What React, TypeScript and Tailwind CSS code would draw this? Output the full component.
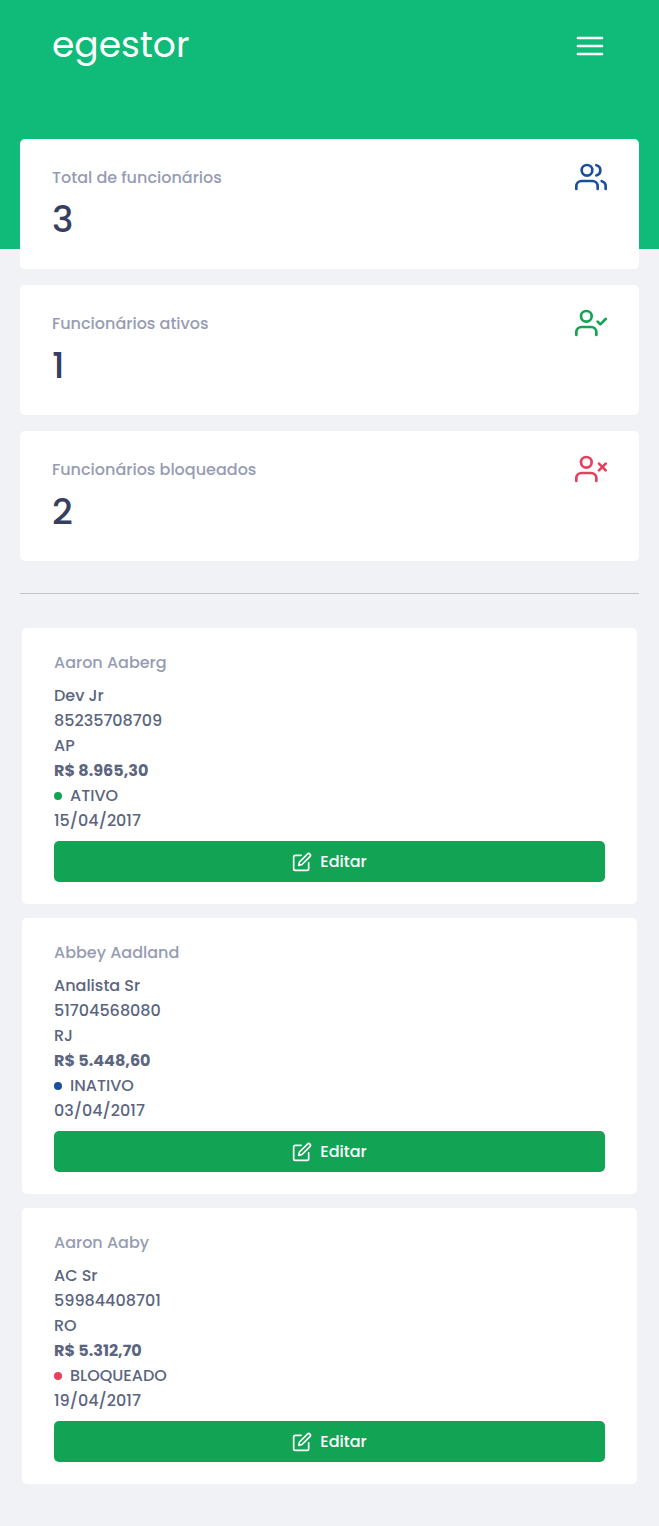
import type { ReactNode } from "react";
import { FiEdit, FiMenu, FiUserCheck, FiUsers, FiUserX } from "react-icons/fi";

type Employee = {
  name: string;
  role: string;
  cpf: string;
  uf: string;
  salary: string;
  status: string;
  dot: string;
  date: string;
};

const employees: Employee[] = [
  { name: "Aaron Aaberg", role: "Dev Jr", cpf: "85235708709", uf: "AP", salary: "R$ 8.965,30", status: "ATIVO", dot: "bg-[#12a454]", date: "15/04/2017" },
  { name: "Abbey Aadland", role: "Analista Sr", cpf: "51704568080", uf: "RJ", salary: "R$ 5.448,60", status: "INATIVO", dot: "bg-[#1a4f9c]", date: "03/04/2017" },
  { name: "Aaron Aaby", role: "AC Sr", cpf: "59984408701", uf: "RO", salary: "R$ 5.312,70", status: "BLOQUEADO", dot: "bg-[#e83f5b]", date: "19/04/2017" },
];

function StatCard({ label, value, icon }: { label: string; value: number; icon: ReactNode }) {
  return (
    <div className="h-[130px] rounded-[5px] bg-white px-8 pt-[22px]">
      <header className="flex h-8 items-center justify-between">
        <p className="pt-0.5 text-[#969cb3]">{label}</p>
        {icon}
      </header>
      <strong className="block text-4xl leading-[54px] font-medium text-[#363f5f]">{value}</strong>
    </div>
  );
}

function EmployeeCard({ employee }: { employee: Employee }) {
  return (
    <article className="flex h-[276px] flex-col rounded-[5px] bg-white px-8 pt-[22px] leading-[25px] text-[#5c6580]">
      <h2 className="mb-2 text-[#969cb3]">{employee.name}</h2>
      <p>{employee.role}</p>
      <p>{employee.cpf}</p>
      <p>{employee.uf}</p>
      <p className="font-bold">{employee.salary}</p>
      <p className="flex items-center gap-2">
        <span className={`size-2 rounded-full ${employee.dot}`} />
        {employee.status}
      </p>
      <p>{employee.date}</p>
      <button className="mt-2 flex h-[41px] items-center justify-center gap-2 rounded-[5px] bg-[#12a454] text-white">
        <FiEdit size={20} />
        Editar
      </button>
    </article>
  );
}

export default function App() {
  return (
    <div className="min-h-[1526px] bg-[#f0f2f5] font-['Poppins','Noto_Sans',sans-serif] text-base font-medium">
      <header className="flex h-[249px] items-start justify-between bg-[#10bb79] pr-[53px] pl-[52px] text-white">
        <h1 className="pt-[18px] text-4xl leading-[54px] font-normal">egestor</h1>
        <FiMenu size={32} className="mt-[30px]" />
      </header>
      <main className="-mt-[110px] px-5">
        <section className="flex flex-col gap-4">
          <StatCard label="Total de funcionários" value={3} icon={<FiUsers size={32} className="text-[#1a4f9c]" />} />
          <StatCard label="Funcionários ativos" value={1} icon={<FiUserCheck size={32} className="text-[#12a454]" />} />
          <StatCard label="Funcionários bloqueados" value={2} icon={<FiUserX size={32} className="text-[#e83f5b]" />} />
        </section>
        <hr className="mt-8 border-0 border-t border-[#c1c3c9]" />
        <section className="mt-[34px] flex flex-col gap-3.5 px-0.5">
          {employees.map((employee) => (
            <EmployeeCard key={employee.cpf} employee={employee} />
          ))}
        </section>
      </main>
    </div>
  );
}
